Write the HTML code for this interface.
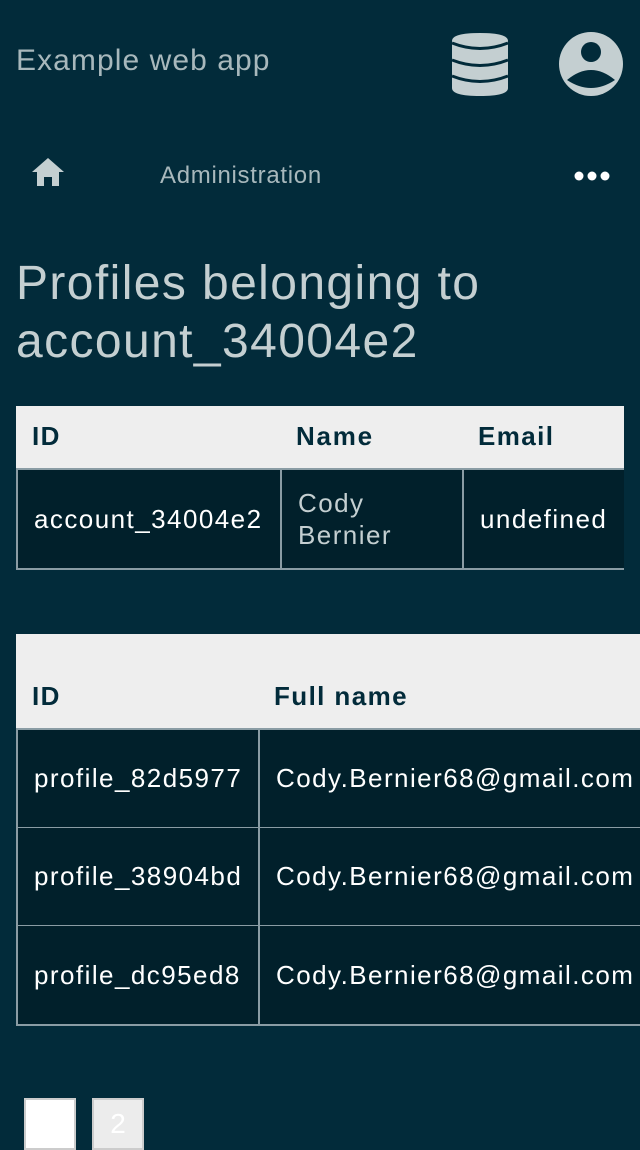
<!DOCTYPE html>
<html><head><meta charset="utf-8"><style>
*{margin:0;padding:0;box-sizing:border-box}
body{width:640px;height:1136px;overflow:hidden;background:#022b3a;font-family:"Liberation Sans",sans-serif;position:relative}
.a{position:absolute;white-space:nowrap}
.hd{background:#eeeeee}
.h{position:absolute;font-size:26px;font-weight:bold;color:#022b3a;letter-spacing:1.4px}
.c{position:absolute;background:#01202b;border-left:2px solid #8a9ca4;border-bottom:2px solid #8a9ca4;color:#fff;font-size:26px;display:flex;align-items:center;padding-left:16px;letter-spacing:1.45px;white-space:nowrap}
</style></head><body>
<div class="a" style="left:16px;top:44px;font-size:30px;color:#a8b8bc;letter-spacing:1.07px">Example web app</div>
<svg class="a" style="left:450px;top:32px" width="60" height="64" viewBox="0 0 60 64"><path d="M2 9 Q2 1 30 1 Q58 1 58 9 V56 Q58 64 30 64 Q2 64 2 56Z" fill="#c4cfd1"/><g fill="none" stroke="#022b3a" stroke-width="3"><path d="M2 11 Q30 22 58 11"/><path d="M2 28 Q30 39 58 28"/><path d="M2 44 Q30 55 58 44"/></g></svg>
<svg class="a" style="left:558px;top:32px" width="66" height="64" viewBox="0 0 66 64"><ellipse cx="33" cy="32" rx="32" ry="32" fill="#c4cfd1"/><circle cx="33" cy="20" r="10" fill="#022b3a"/><path d="M9 48 Q33 28 57 48 Q33 64 9 48Z" fill="#022b3a"/></svg>
<svg class="a" style="left:32px;top:158px" width="32" height="28" viewBox="0 0 32 28"><path d="M16 0 L32 14 H27 V28 H20 V19 H12 V28 H5 V14 H0Z" fill="#c4cfd1"/></svg>
<div class="a" style="left:160px;top:162px;font-size:24px;color:#a8b8bc;letter-spacing:0.7px">Administration</div>
<svg class="a" style="left:574px;top:170px" width="36" height="12"><circle cx="5" cy="6" r="4.5" fill="#fff"/><circle cx="18" cy="6" r="4.5" fill="#fff"/><circle cx="31" cy="6" r="4.5" fill="#fff"/></svg>
<div class="a" style="left:16px;top:255px;font-size:48px;line-height:58px;color:#c4cfd1;letter-spacing:1.4px">Profiles belonging to<br>account_34004e2</div>

<div class="a hd" style="left:16px;top:406px;width:608px;height:64px;border-bottom:2px solid #8a9ca4"></div>
<div class="h" style="left:32px;top:421px">ID</div>
<div class="h" style="left:296px;top:421px;letter-spacing:1.75px">Name</div>
<div class="h" style="left:478px;top:421px">Email</div>
<div class="c" style="left:16px;top:470px;width:266px;height:100px">account_34004e2</div>
<div class="c" style="left:280px;top:470px;width:184px;height:100px;color:#c4cfd1;line-height:32px">Cody<br>Bernier</div>
<div class="c" style="left:462px;top:470px;width:162px;height:100px">undefined</div>

<div class="a hd" style="left:16px;top:634px;width:624px;height:96px;border-bottom:2px solid #8a9ca4"></div>
<div class="h" style="left:32px;top:681px">ID</div>
<div class="h" style="left:274px;top:681px">Full name</div>
<div class="c" style="left:16px;top:730px;width:244px;height:99px">profile_82d5977</div>
<div class="c" style="left:258px;top:730px;width:400px;height:99px">Cody.Bernier68@gmail.com</div>
<div class="c" style="left:16px;top:828px;width:244px;height:99px">profile_38904bd</div>
<div class="c" style="left:258px;top:828px;width:400px;height:99px">Cody.Bernier68@gmail.com</div>
<div class="c" style="left:16px;top:926px;width:244px;height:100px">profile_dc95ed8</div>
<div class="c" style="left:258px;top:926px;width:400px;height:100px">Cody.Bernier68@gmail.com</div>

<div class="a" style="left:24px;top:1098px;width:52px;height:52px;background:#fff;border:2px solid #ccc"></div>
<div class="a" style="left:92px;top:1098px;width:52px;height:52px;background:#ececec;border:2px solid #ccc;color:#fff;font-size:28px;text-align:center;padding-top:8px">2</div>
</body></html>
